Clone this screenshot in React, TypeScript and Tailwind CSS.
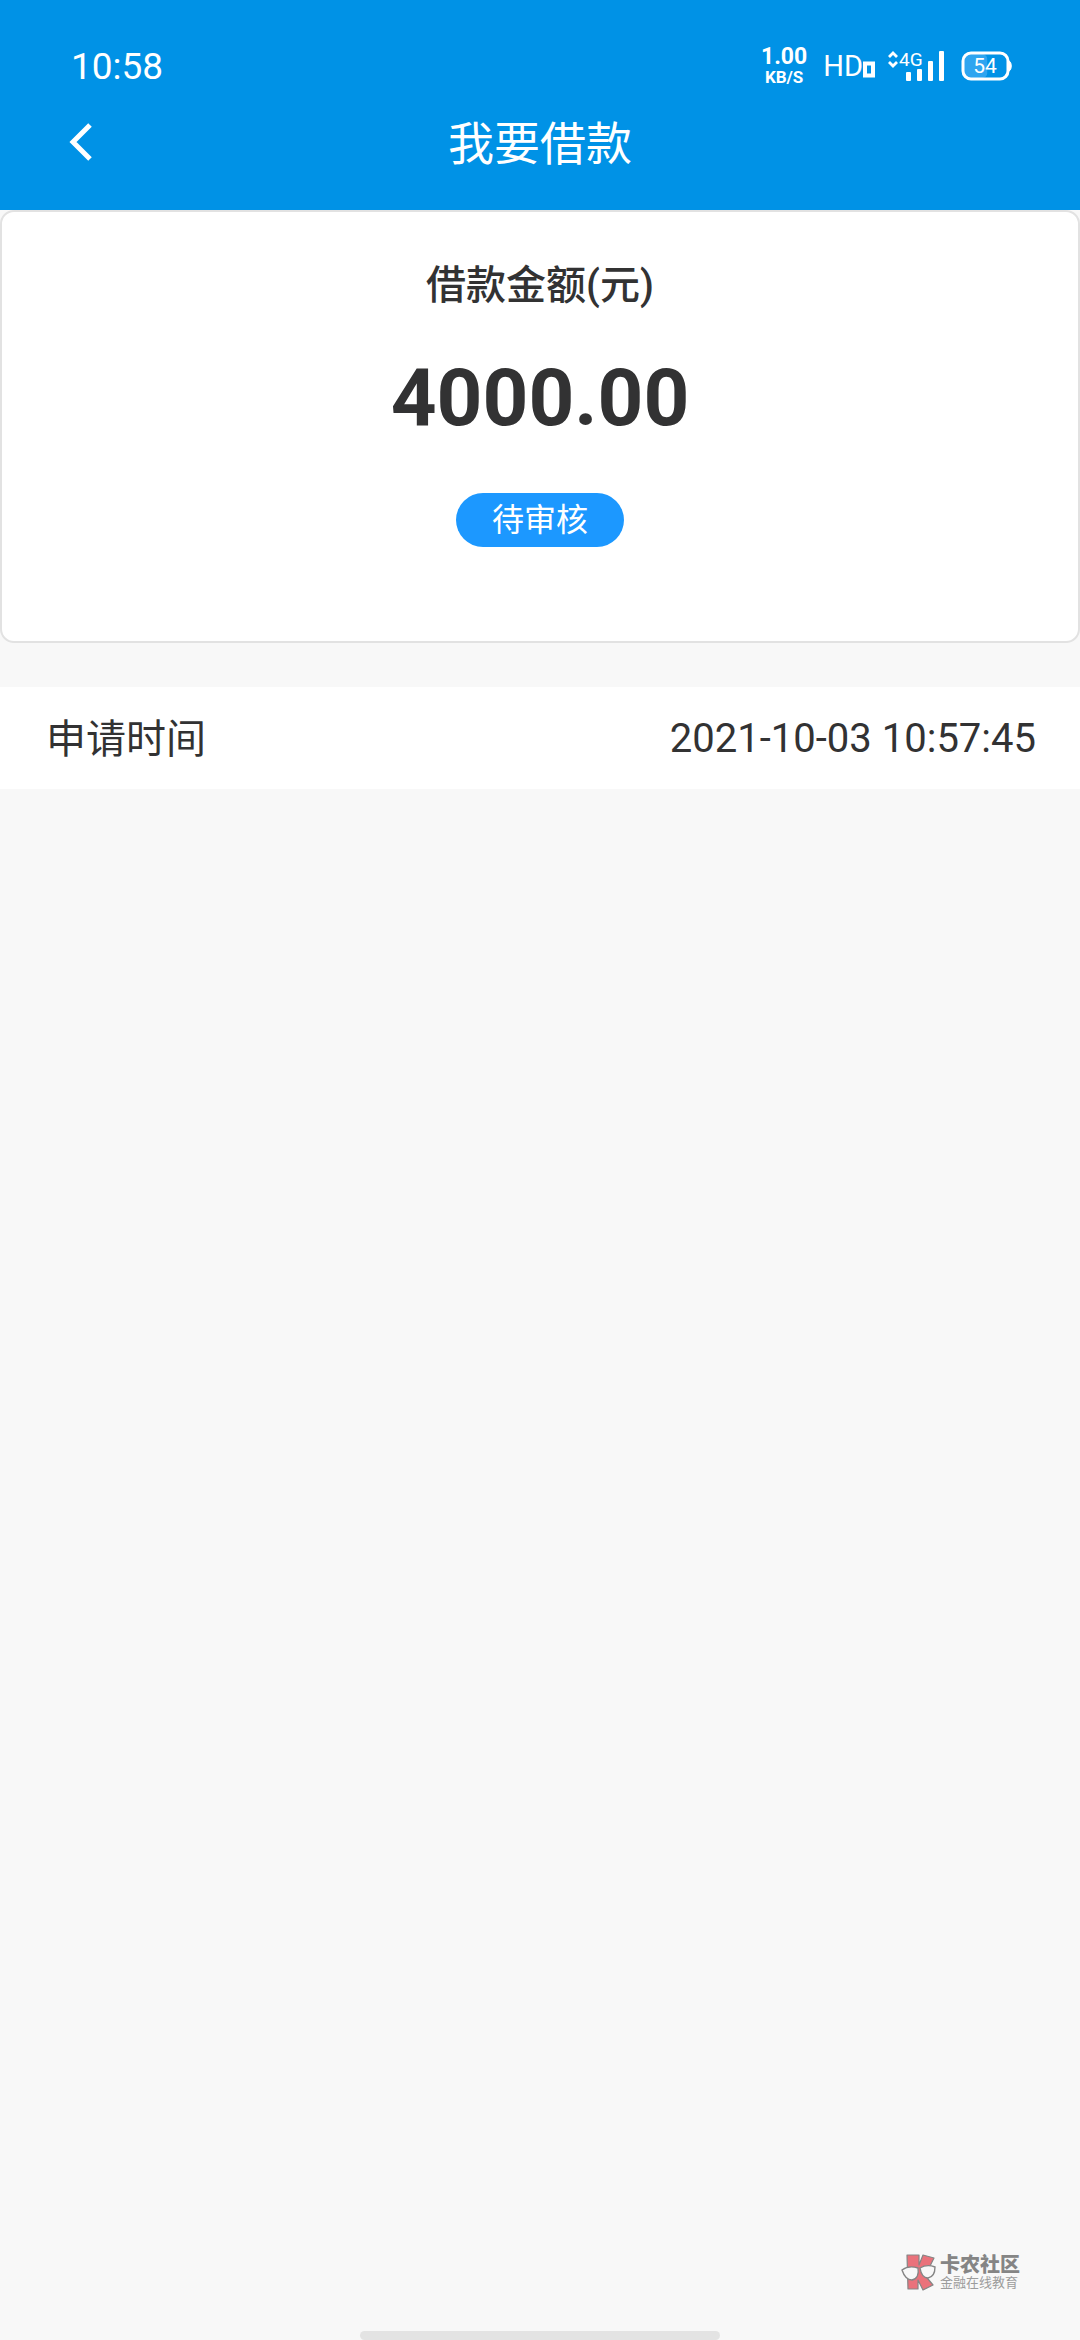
import type { ReactNode } from 'react';

const application = {
  amount: '4000.00',
  status: '待审核',
  appliedAt: '2021-10-03 10:57:45',
};

function SignalIcon() {
  return (
    <svg width="58" height="36" viewBox="0 0 58 36" fill="none" className="text-white" aria-label="4G">
      <path d="M2 9l4-4 4 4M2 14l4 4 4-4" stroke="currentColor" strokeWidth="2.8" />
      <text x="12" y="18" fill="currentColor" fontSize="19" fontFamily="Roboto, sans-serif">
        4G
      </text>
      <g fill="currentColor">
        <rect x="19" y="24" width="5" height="9" rx="1" />
        <rect x="30" y="21" width="5" height="12" rx="1" />
        <rect x="41" y="13" width="5" height="20" rx="1" />
        <rect x="52" y="3" width="5" height="30" rx="1" />
      </g>
    </svg>
  );
}

function BatteryIcon({ level }: { level: number }) {
  return (
    <svg width="51" height="30" viewBox="0 0 51 30" fill="none" aria-label={`${level}%`}>
      <rect x="3" y="3" width={(level / 100) * 43} height="24" rx="5" fill="#2fa5f0" />
      <rect x="2" y="2" width="45" height="26" rx="8" stroke="#fff" strokeWidth="3" />
      <path d="M48 10c3 1 3 9 0 10z" fill="#fff" stroke="#fff" />
      <text x="24" y="22" fill="#fff" fontSize="21" textAnchor="middle" fontFamily="Roboto, sans-serif">
        {level}
      </text>
    </svg>
  );
}

function StatusBar() {
  return (
    <div className="flex h-15 items-center justify-between pr-[68px] pl-[71px]">
      <span className="text-[37px] leading-none">10:58</span>
      <div className="flex items-center">
        <div className="flex flex-col items-center font-bold">
          <span className="text-[23px] leading-[22px]">1.00</span>
          <span className="text-[17px] leading-[18px]">KB/S</span>
        </div>
        <div className="ml-4 flex items-end">
          <span className="text-[29px] leading-[30px]">HD</span>
          <svg width="12" height="26" viewBox="0 0 12 26" fill="none">
            <path d="M2 8.5h8v12H2z" stroke="#fff" strokeWidth="4" />
          </svg>
        </div>
        <div className="ml-3">
          <SignalIcon />
        </div>
        <div className="ml-4">
          <BatteryIcon level={54} />
        </div>
      </div>
    </div>
  );
}

function Header({ title }: { title: string }) {
  return (
    <header className="bg-[#0092e6] pt-9 pb-[22px] text-white">
      <StatusBar />
      <div className="grid h-[92px] grid-cols-[1fr_auto_1fr] items-center">
        <button type="button" aria-label="返回" className="ml-[68px] w-fit">
          <svg width="25" height="38" viewBox="0 0 25 38" fill="none">
            <path d="M22 2L5 19l17 17" stroke="#fff" strokeWidth="5" />
          </svg>
        </button>
        <h1 className="pt-1 text-[46px] leading-[60px]">{title}</h1>
      </div>
    </header>
  );
}

function InfoRow({ label, children }: { label: string; children: ReactNode }) {
  return (
    <div className="flex h-[102px] items-center justify-between bg-white pr-11 pl-[46px] text-[40px] leading-[60px]">
      <dt className="pt-1">{label}</dt>
      <dd className="pt-0.5">{children}</dd>
    </div>
  );
}

function Watermark() {
  return (
    <div className="flex items-center gap-1 text-[#858585]">
      <svg width="35" height="38" viewBox="0 0 35 38" fill="none">
        <path
          d="M6 2h12v10l4-10 11 3-6 12-5 3 10 12-10 5-5-10v9H7z"
          fill="#ea727b"
          stroke="#858585"
          strokeWidth="1.2"
          strokeLinejoin="round"
        />
        <path
          d="M1 17c4-3 10-4 16-2 1 6-1 11-6 12-5 0-8-4-10-10zM19 15c5-3 10-3 15-1 0 6-2 10-7 11-5 0-7-4-8-10z"
          fill="#f8f8f8"
          stroke="#858585"
          strokeWidth="1.4"
        />
      </svg>
      <div>
        <div className="text-[20px] leading-[22px] font-black">卡农社区</div>
        <div className="text-[13px] leading-[14px] text-[#9c9c9c]">金融在线教育</div>
      </div>
    </div>
  );
}

export default function App() {
  return (
    <div className="flex min-h-screen flex-col bg-[#f8f8f8] font-['Roboto','Noto_Sans_CJK_SC',sans-serif] text-[#323233]">
      <Header title="我要借款" />
      <main className="flex-1">
        <section className="flex flex-col items-center rounded-[14px] border-2 border-[#e2e2e2] bg-white pt-11 pb-[94px]">
          <h2 className="text-[40px] leading-[60px] font-medium">借款金额(元)</h2>
          <p className="mt-[34px] text-[80px] leading-[96px] font-bold">{application.amount}</p>
          <span className="mt-[47px] rounded-full bg-[#1c98ff] px-9 text-[32px] leading-[54px] text-white">
            {application.status}
          </span>
        </section>
        <dl className="mt-11">
          <InfoRow label="申请时间">{application.appliedAt}</InfoRow>
        </dl>
      </main>
      <footer className="flex flex-col">
        <div className="mr-[60px] mb-10 self-end">
          <Watermark />
        </div>
        <div className="h-[9px] w-1/3 self-center rounded-full bg-[#e3e3e3]" />
      </footer>
    </div>
  );
}
